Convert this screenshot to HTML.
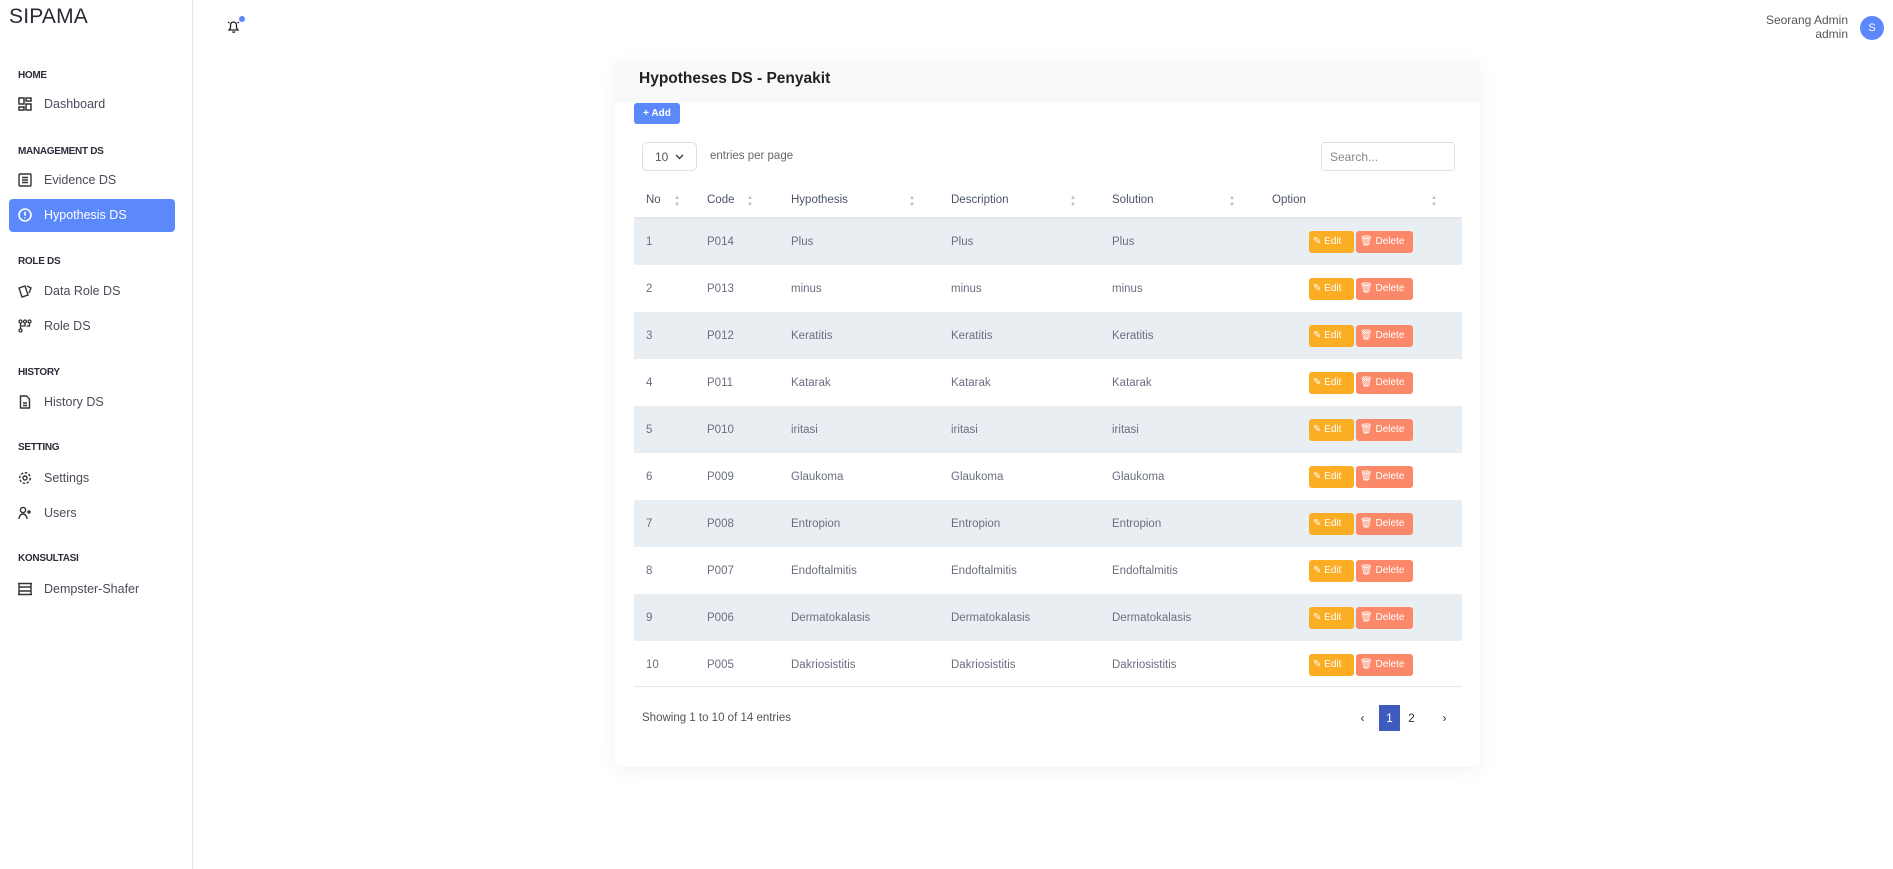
<!DOCTYPE html>
<html><head><meta charset="utf-8"><style>
*{box-sizing:border-box;margin:0;padding:0}
body{width:1893px;height:869px;background:#fff;font-family:"Liberation Sans",sans-serif;position:relative;overflow:hidden;color:#333}
.side{position:absolute;left:0;top:0;width:193px;height:869px;border-right:1px solid #e6e6e6}
.logo{position:absolute;left:9px;top:5px;font-size:21px;color:#2a2a35;letter-spacing:.2px}
.sec{position:absolute;left:18px;font-size:10px;font-weight:bold;color:#2c2c3a;letter-spacing:-.3px}
.it{position:absolute;left:18px;font-size:12.5px;color:#4a4a5a;display:flex;align-items:center}
.it svg{width:14px;height:14px;margin-right:12px}
.act{position:absolute;left:9px;top:199px;width:166px;height:33px;background:#5b89fc;border-radius:4px}
.card{position:absolute;left:615px;top:61px;width:865px;height:706px;background:#fff;border-radius:6px;box-shadow:0 4px 20px rgba(0,0,0,.05)}
.chead{height:42px;background:#f8f9fa;border-radius:6px 6px 0 0;padding:9px 24px;font-size:15.5px;font-weight:bold;color:#222}
.add{position:absolute;left:19px;top:42px;width:46px;height:21px;background:#5b89fc;border-radius:3px;color:#fff;font-size:10px;font-weight:bold;text-align:center;line-height:21px}
.sel{position:absolute;left:27px;top:81px;width:55px;height:29px;border:1px solid #dcdfe6;border-radius:5px;font-size:12px;color:#555;padding:7px 12px;white-space:nowrap}
.sel svg{position:absolute;left:32px;top:11px}
.epp{position:absolute;left:95px;top:89px;font-size:11.5px;color:#666}
.search{position:absolute;left:706px;top:81px;width:134px;height:29px;border:1px solid #dcdfe6;border-radius:3px;font-size:12px;color:#888;padding:7px 8px}
table{position:absolute;left:19px;top:125px;width:828px;border-collapse:collapse;font-size:11.5px}
th{height:32px;text-align:left;color:#4a5468;font-weight:normal;font-size:11.5px;padding-left:12px;border-bottom:2px solid #e2e6ec;position:relative;padding-bottom:3px}
td{height:47px;color:#6a6f80;padding-left:12px}
tr.g td{background:#e9eef3}
.srt{position:absolute;top:9px;font-size:6px;color:#bbb;line-height:7px}
.e,.d{display:inline-block;height:22px;line-height:22px;border-radius:3px;color:#fff;font-size:10px;vertical-align:middle}
.e{background:#fbad24;width:45px;padding-left:4px}
.d{background:#fb8868;width:57px;padding-left:4px;margin-left:2px}
.sep{position:absolute;left:19px;top:625px;width:828px;height:1px;background:#e2e8f0}
.show{position:absolute;left:27px;top:651px;font-size:11.5px;color:#555}
.pg{position:absolute;top:644px;font-size:12px;color:#333;height:26px;line-height:26px;text-align:center;width:21px}
</style></head><body>
<div class="side">
<div class="logo">SIPAMA</div>
<div class="sec" style="top:70px">HOME</div>
<div class="it" style="top:97px"><svg viewBox="0 0 14 14" fill="none" stroke="#333" stroke-width="1.5"><rect x="1" y="1" width="5" height="6"/><rect x="8" y="1" width="5" height="3"/><rect x="1" y="10" width="5" height="3"/><rect x="8" y="7" width="5" height="6"/></svg>Dashboard</div>
<div class="sec" style="top:146px">MANAGEMENT DS</div>
<div class="it" style="top:173px"><svg viewBox="0 0 14 14" fill="none" stroke="#333" stroke-width="1.4"><rect x="1" y="1" width="12" height="12" rx="1"/><path d="M4 4.5h6M4 7h6M4 9.5h6"/></svg>Evidence DS</div>
<div class="act"></div>
<div class="it" style="top:208px;color:#fff"><svg viewBox="0 0 14 14" fill="none" stroke="#fff" stroke-width="1.6"><circle cx="7" cy="7" r="6"/><path d="M7 3.8v3.8M7 9.4v1"/></svg>Hypothesis DS</div>
<div class="sec" style="top:256px">ROLE DS</div>
<div class="it" style="top:284px"><svg viewBox="0 0 14 14" fill="none" stroke="#333" stroke-width="1.4"><path d="M1 4l6-2 3 9-6 2z M9 2l4 2-2 5"/></svg>Data Role DS</div>
<div class="it" style="top:319px"><svg viewBox="0 0 14 14" fill="none" stroke="#333" stroke-width="1.3"><circle cx="2.5" cy="2.5" r="1.5"/><circle cx="7" cy="2.5" r="1.5"/><circle cx="11.5" cy="2.5" r="1.5"/><circle cx="2.5" cy="11.5" r="1.5"/><path d="M2.5 4v6M7 4v3H2.5M11.5 4v3h-3"/></svg>Role DS</div>
<div class="sec" style="top:367px">HISTORY</div>
<div class="it" style="top:395px"><svg viewBox="0 0 14 14" fill="none" stroke="#333" stroke-width="1.4"><path d="M2.5 1h6l3 3v9h-9z M5 8h4M5 10.5h4"/></svg>History DS</div>
<div class="sec" style="top:442px">SETTING</div>
<div class="it" style="top:471px"><svg viewBox="0 0 14 14" fill="none" stroke="#333" stroke-width="1.4"><circle cx="7" cy="7" r="2"/><circle cx="7" cy="7" r="5.3" stroke-dasharray="2.5 1.6"/></svg>Settings</div>
<div class="it" style="top:506px"><svg viewBox="0 0 14 14" fill="none" stroke="#333" stroke-width="1.4"><circle cx="5" cy="4" r="2.6"/><path d="M1 13c0-3 2-5 4-5s4 2 4 5M11 4v4M9 6h4"/></svg>Users</div>
<div class="sec" style="top:553px">KONSULTASI</div>
<div class="it" style="top:582px"><svg viewBox="0 0 14 14" fill="none" stroke="#333" stroke-width="1.4"><path d="M1 1v12M13 1v12M0 1.5h14M0 12.5h14M1 5h12M1 9h12"/></svg>Dempster-Shafer</div>
</div>
<svg style="position:absolute;left:225px;top:18px" width="18" height="16" viewBox="0 0 18 16" fill="none" stroke="#222" stroke-width="1.3"><path d="M4 12h9l-1.5-2V7a3 3 0 0 0-6 0v3z M7.5 13.5a1.3 1.3 0 0 0 2.4 0 M3 4l1.5 1M14 4l-1.5 1"/></svg>
<div style="position:absolute;left:239px;top:16px;width:6px;height:6px;border-radius:50%;background:#5b89fc"></div>
<div style="position:absolute;right:45px;top:13px;text-align:right;font-size:12px;color:#555;line-height:14px">Seorang Admin<br>admin</div>
<div style="position:absolute;left:1860px;top:16px;width:24px;height:24px;border-radius:50%;background:#5b89fc;color:#fff;font-size:11px;text-align:center;line-height:24px">S</div>
<div class="card">
<div class="chead">Hypotheses DS - Penyakit</div>
<div class="add">+ Add</div>
<div class="sel">10<svg width="9" height="6" viewBox="0 0 9 6" fill="none" stroke="#333" stroke-width="1.3"><path d="M1 1l3.5 3.5L8 1"/></svg></div>
<div class="epp">entries per page</div>
<div class="search">Search...</div>
<table>
<colgroup><col style="width:61px"><col style="width:84px"><col style="width:160px"><col style="width:161px"><col style="width:160px"><col></colgroup>
<tr><th>No<span class="srt" style="left:40px">▲<br>▼</span></th><th>Code<span class="srt" style="left:52px">▲<br>▼</span></th><th>Hypothesis<span class="srt" style="left:130px">▲<br>▼</span></th><th>Description<span class="srt" style="left:131px">▲<br>▼</span></th><th>Solution<span class="srt" style="left:129px">▲<br>▼</span></th><th>Option<span class="srt" style="left:171px">▲<br>▼</span></th></tr>
<tr class="g"><td>1</td><td>P014</td><td>Plus</td><td>Plus</td><td>Plus</td><td style="padding-left:49px"><span class="e">✎ Edit</span><span class="d">🗑 Delete</span></td></tr>
<tr><td>2</td><td>P013</td><td>minus</td><td>minus</td><td>minus</td><td style="padding-left:49px"><span class="e">✎ Edit</span><span class="d">🗑 Delete</span></td></tr>
<tr class="g"><td>3</td><td>P012</td><td>Keratitis</td><td>Keratitis</td><td>Keratitis</td><td style="padding-left:49px"><span class="e">✎ Edit</span><span class="d">🗑 Delete</span></td></tr>
<tr><td>4</td><td>P011</td><td>Katarak</td><td>Katarak</td><td>Katarak</td><td style="padding-left:49px"><span class="e">✎ Edit</span><span class="d">🗑 Delete</span></td></tr>
<tr class="g"><td>5</td><td>P010</td><td>iritasi</td><td>iritasi</td><td>iritasi</td><td style="padding-left:49px"><span class="e">✎ Edit</span><span class="d">🗑 Delete</span></td></tr>
<tr><td>6</td><td>P009</td><td>Glaukoma</td><td>Glaukoma</td><td>Glaukoma</td><td style="padding-left:49px"><span class="e">✎ Edit</span><span class="d">🗑 Delete</span></td></tr>
<tr class="g"><td>7</td><td>P008</td><td>Entropion</td><td>Entropion</td><td>Entropion</td><td style="padding-left:49px"><span class="e">✎ Edit</span><span class="d">🗑 Delete</span></td></tr>
<tr><td>8</td><td>P007</td><td>Endoftalmitis</td><td>Endoftalmitis</td><td>Endoftalmitis</td><td style="padding-left:49px"><span class="e">✎ Edit</span><span class="d">🗑 Delete</span></td></tr>
<tr class="g"><td>9</td><td>P006</td><td>Dermatokalasis</td><td>Dermatokalasis</td><td>Dermatokalasis</td><td style="padding-left:49px"><span class="e">✎ Edit</span><span class="d">🗑 Delete</span></td></tr>
<tr><td>10</td><td>P005</td><td>Dakriosistitis</td><td>Dakriosistitis</td><td>Dakriosistitis</td><td style="padding-left:49px"><span class="e">✎ Edit</span><span class="d">🗑 Delete</span></td></tr>
</table>
<div class="sep"></div>
<div class="show">Showing 1 to 10 of 14 entries</div>
<div class="pg" style="left:737px">‹</div>
<div class="pg" style="left:764px;background:#3f5bbf;color:#fff">1</div>
<div class="pg" style="left:786px">2</div>
<div class="pg" style="left:819px">›</div>
</div>
</body></html>
